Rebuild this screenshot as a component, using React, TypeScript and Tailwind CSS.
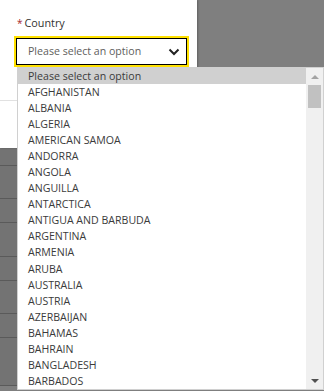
import React from "react";

const countries = [
  "AFGHANISTAN",
  "ALBANIA",
  "ALGERIA",
  "AMERICAN SAMOA",
  "ANDORRA",
  "ANGOLA",
  "ANGUILLA",
  "ANTARCTICA",
  "ANTIGUA AND BARBUDA",
  "ARGENTINA",
  "ARMENIA",
  "ARUBA",
  "AUSTRALIA",
  "AUSTRIA",
  "AZERBAIJAN",
  "BAHAMAS",
  "BAHRAIN",
  "BANGLADESH",
  "BARBADOS",
];

export default function App() {
  return (
    <div
      className="relative w-[324px] h-[391px] overflow-hidden bg-[#7f7f7f]"
      style={{ fontFamily: '"Open Sans", "Noto Sans", sans-serif' }}
    >
      {/* white form panel */}
      <div className="flex">
        <div className="w-[197px] h-[148px] bg-white flex flex-col shadow-[1px_0_2px_rgba(0,0,0,0.25)]">
          <div className="pt-[15px] pl-[17px] text-[10.8px] leading-[16px] text-[#323130]">
            <span className="text-[#a4262c] text-[10px] mr-[2px]">*</span>
            Country
          </div>
          <div className="ml-[14px] mt-[5px] w-[175px] h-[31px] border-2 border-[#ffe100]">
            <div className="h-full border border-black flex items-center justify-between pl-[11px] pr-[6px]">
              <span className="text-[10.6px] text-[#605e5c]">Please select an option</span>
              <svg width="12" height="8" viewBox="0 0 12 8">
                <path d="M1.5 1.5 L6 6 L10.5 1.5" fill="none" stroke="#222" strokeWidth="2" />
              </svg>
            </div>
          </div>
          <div className="mt-[33px] h-px bg-[#e1e1e1]" />
        </div>
      </div>
      {/* rows below the panel (mostly hidden) */}
      <div className="flex flex-col bg-[#737373]">
        <div className="h-[18px] border-b border-[#5a5a5a]" />
        <div className="h-[33px] border-b border-[#5a5a5a]" />
        <div className="h-[24px] border-b border-[#5a5a5a]" />
        <div className="h-[34px] border-b border-[#5a5a5a]" />
        <div className="h-[24px] border-b border-[#5a5a5a]" />
        <div className="h-[33px] border-b border-[#5a5a5a]" />
        <div className="h-[24px] border-b border-[#5a5a5a]" />
        <div className="h-[48px] border-b border-[#5a5a5a]" />
      </div>

      {/* open dropdown list */}
      <div className="absolute left-[17px] top-[67px] w-[307px] h-[323px] bg-white border border-[#d0d0d0] flex">
        <div className="flex-1 flex flex-col text-[10.6px] text-[#3b3b3b]">
          <div className="h-[16px] leading-[16px] bg-[#d0d0d0] pl-[10px]">Please select an option</div>
          {countries.map((c) => (
            <div key={c} className="h-[16.15px] leading-[16px] pl-[10px] whitespace-nowrap">
              {c}
            </div>
          ))}
        </div>
        <div className="w-[17px] bg-[#f0f0f0] flex flex-col items-center">
          <div className="h-[17px] flex items-center justify-center">
            <svg width="8" height="4" viewBox="0 0 8 4">
              <path d="M0 4 L4 0 L8 4 Z" fill="#a3a3a3" />
            </svg>
          </div>
          <div className="w-[13px] h-[23px] bg-[#c1c1c1]" />
          <div className="flex-1" />
          <div className="h-[17px] flex items-center justify-center">
            <svg width="8" height="4" viewBox="0 0 8 4">
              <path d="M0 0 L8 0 L4 4 Z" fill="#505050" />
            </svg>
          </div>
        </div>
      </div>
    </div>
  );
}
